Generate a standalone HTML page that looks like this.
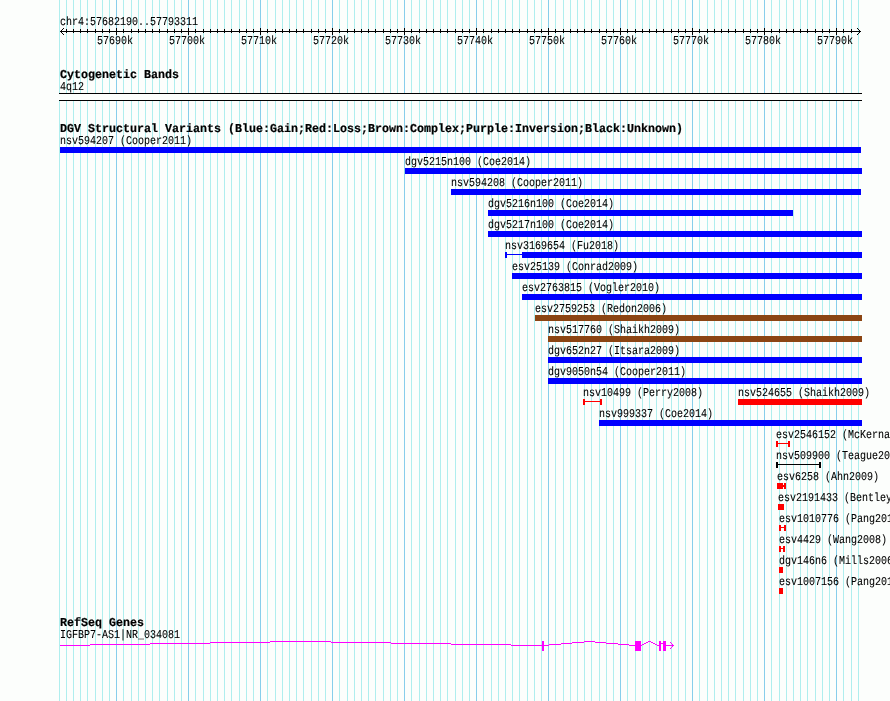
<!DOCTYPE html>
<html><head><meta charset="utf-8"><title>GBrowse</title>
<style>
html,body{margin:0;padding:0;background:#fcfefc;}
body{width:890px;height:701px;overflow:hidden;}
svg{display:block;will-change:transform;}
text{font-family:"Liberation Mono",monospace;white-space:pre;text-rendering:geometricPrecision;}
text.r{font-size:12px;font-weight:normal;stroke:#000;stroke-width:0.1px;}
text.b{font-size:12px;font-weight:bold;stroke:#000;stroke-width:0.2px;}
</style></head><body>
<svg width="890" height="701" viewBox="0 0 890 701">
<rect x="0" y="0" width="890" height="701" fill="#fcfefc"/>
<g shape-rendering="crispEdges">
<rect x="59" y="0" width="1" height="701" fill="#afeeee"/>
<rect x="66" y="0" width="1" height="701" fill="#afeeee"/>
<rect x="73" y="0" width="1" height="701" fill="#afeeee"/>
<rect x="80" y="0" width="1" height="701" fill="#afeeee"/>
<rect x="87" y="0" width="1" height="701" fill="#afeeee"/>
<rect x="95" y="0" width="1" height="701" fill="#afeeee"/>
<rect x="102" y="0" width="1" height="701" fill="#afeeee"/>
<rect x="109" y="0" width="1" height="701" fill="#afeeee"/>
<rect x="116" y="0" width="1" height="701" fill="#87ceeb"/>
<rect x="123" y="0" width="1" height="701" fill="#afeeee"/>
<rect x="131" y="0" width="1" height="701" fill="#afeeee"/>
<rect x="138" y="0" width="1" height="701" fill="#afeeee"/>
<rect x="145" y="0" width="1" height="701" fill="#afeeee"/>
<rect x="152" y="0" width="1" height="701" fill="#afeeee"/>
<rect x="159" y="0" width="1" height="701" fill="#afeeee"/>
<rect x="167" y="0" width="1" height="701" fill="#afeeee"/>
<rect x="174" y="0" width="1" height="701" fill="#afeeee"/>
<rect x="181" y="0" width="1" height="701" fill="#afeeee"/>
<rect x="188" y="0" width="1" height="701" fill="#87ceeb"/>
<rect x="195" y="0" width="1" height="701" fill="#afeeee"/>
<rect x="203" y="0" width="1" height="701" fill="#afeeee"/>
<rect x="210" y="0" width="1" height="701" fill="#afeeee"/>
<rect x="217" y="0" width="1" height="701" fill="#afeeee"/>
<rect x="224" y="0" width="1" height="701" fill="#afeeee"/>
<rect x="231" y="0" width="1" height="701" fill="#afeeee"/>
<rect x="239" y="0" width="1" height="701" fill="#afeeee"/>
<rect x="246" y="0" width="1" height="701" fill="#afeeee"/>
<rect x="253" y="0" width="1" height="701" fill="#afeeee"/>
<rect x="260" y="0" width="1" height="701" fill="#87ceeb"/>
<rect x="267" y="0" width="1" height="701" fill="#afeeee"/>
<rect x="275" y="0" width="1" height="701" fill="#afeeee"/>
<rect x="282" y="0" width="1" height="701" fill="#afeeee"/>
<rect x="289" y="0" width="1" height="701" fill="#afeeee"/>
<rect x="296" y="0" width="1" height="701" fill="#afeeee"/>
<rect x="303" y="0" width="1" height="701" fill="#afeeee"/>
<rect x="311" y="0" width="1" height="701" fill="#afeeee"/>
<rect x="318" y="0" width="1" height="701" fill="#afeeee"/>
<rect x="325" y="0" width="1" height="701" fill="#afeeee"/>
<rect x="332" y="0" width="1" height="701" fill="#87ceeb"/>
<rect x="339" y="0" width="1" height="701" fill="#afeeee"/>
<rect x="347" y="0" width="1" height="701" fill="#afeeee"/>
<rect x="354" y="0" width="1" height="701" fill="#afeeee"/>
<rect x="361" y="0" width="1" height="701" fill="#afeeee"/>
<rect x="368" y="0" width="1" height="701" fill="#afeeee"/>
<rect x="375" y="0" width="1" height="701" fill="#afeeee"/>
<rect x="383" y="0" width="1" height="701" fill="#afeeee"/>
<rect x="390" y="0" width="1" height="701" fill="#afeeee"/>
<rect x="397" y="0" width="1" height="701" fill="#afeeee"/>
<rect x="404" y="0" width="1" height="701" fill="#87ceeb"/>
<rect x="411" y="0" width="1" height="701" fill="#afeeee"/>
<rect x="419" y="0" width="1" height="701" fill="#afeeee"/>
<rect x="426" y="0" width="1" height="701" fill="#afeeee"/>
<rect x="433" y="0" width="1" height="701" fill="#afeeee"/>
<rect x="440" y="0" width="1" height="701" fill="#afeeee"/>
<rect x="447" y="0" width="1" height="701" fill="#afeeee"/>
<rect x="455" y="0" width="1" height="701" fill="#afeeee"/>
<rect x="462" y="0" width="1" height="701" fill="#afeeee"/>
<rect x="469" y="0" width="1" height="701" fill="#afeeee"/>
<rect x="476" y="0" width="1" height="701" fill="#87ceeb"/>
<rect x="483" y="0" width="1" height="701" fill="#afeeee"/>
<rect x="491" y="0" width="1" height="701" fill="#afeeee"/>
<rect x="498" y="0" width="1" height="701" fill="#afeeee"/>
<rect x="505" y="0" width="1" height="701" fill="#afeeee"/>
<rect x="512" y="0" width="1" height="701" fill="#afeeee"/>
<rect x="519" y="0" width="1" height="701" fill="#afeeee"/>
<rect x="527" y="0" width="1" height="701" fill="#afeeee"/>
<rect x="534" y="0" width="1" height="701" fill="#afeeee"/>
<rect x="541" y="0" width="1" height="701" fill="#afeeee"/>
<rect x="548" y="0" width="1" height="701" fill="#87ceeb"/>
<rect x="555" y="0" width="1" height="701" fill="#afeeee"/>
<rect x="563" y="0" width="1" height="701" fill="#afeeee"/>
<rect x="570" y="0" width="1" height="701" fill="#afeeee"/>
<rect x="577" y="0" width="1" height="701" fill="#afeeee"/>
<rect x="584" y="0" width="1" height="701" fill="#afeeee"/>
<rect x="591" y="0" width="1" height="701" fill="#afeeee"/>
<rect x="599" y="0" width="1" height="701" fill="#afeeee"/>
<rect x="606" y="0" width="1" height="701" fill="#afeeee"/>
<rect x="613" y="0" width="1" height="701" fill="#afeeee"/>
<rect x="620" y="0" width="1" height="701" fill="#87ceeb"/>
<rect x="627" y="0" width="1" height="701" fill="#afeeee"/>
<rect x="635" y="0" width="1" height="701" fill="#afeeee"/>
<rect x="642" y="0" width="1" height="701" fill="#afeeee"/>
<rect x="649" y="0" width="1" height="701" fill="#afeeee"/>
<rect x="656" y="0" width="1" height="701" fill="#afeeee"/>
<rect x="663" y="0" width="1" height="701" fill="#afeeee"/>
<rect x="671" y="0" width="1" height="701" fill="#afeeee"/>
<rect x="678" y="0" width="1" height="701" fill="#afeeee"/>
<rect x="685" y="0" width="1" height="701" fill="#afeeee"/>
<rect x="692" y="0" width="1" height="701" fill="#87ceeb"/>
<rect x="699" y="0" width="1" height="701" fill="#afeeee"/>
<rect x="707" y="0" width="1" height="701" fill="#afeeee"/>
<rect x="714" y="0" width="1" height="701" fill="#afeeee"/>
<rect x="721" y="0" width="1" height="701" fill="#afeeee"/>
<rect x="728" y="0" width="1" height="701" fill="#afeeee"/>
<rect x="735" y="0" width="1" height="701" fill="#afeeee"/>
<rect x="743" y="0" width="1" height="701" fill="#afeeee"/>
<rect x="750" y="0" width="1" height="701" fill="#afeeee"/>
<rect x="757" y="0" width="1" height="701" fill="#afeeee"/>
<rect x="764" y="0" width="1" height="701" fill="#87ceeb"/>
<rect x="771" y="0" width="1" height="701" fill="#afeeee"/>
<rect x="779" y="0" width="1" height="701" fill="#afeeee"/>
<rect x="786" y="0" width="1" height="701" fill="#afeeee"/>
<rect x="793" y="0" width="1" height="701" fill="#afeeee"/>
<rect x="800" y="0" width="1" height="701" fill="#afeeee"/>
<rect x="807" y="0" width="1" height="701" fill="#afeeee"/>
<rect x="815" y="0" width="1" height="701" fill="#afeeee"/>
<rect x="822" y="0" width="1" height="701" fill="#afeeee"/>
<rect x="829" y="0" width="1" height="701" fill="#afeeee"/>
<rect x="836" y="0" width="1" height="701" fill="#87ceeb"/>
<rect x="843" y="0" width="1" height="701" fill="#afeeee"/>
<rect x="851" y="0" width="1" height="701" fill="#afeeee"/>
<rect x="858" y="0" width="1" height="701" fill="#afeeee"/>
<rect x="60" y="31" width="801" height="1" fill="#000"/>
<rect x="61" y="30" width="1" height="1" fill="#000"/>
<rect x="859" y="30" width="1" height="1" fill="#000"/>
<rect x="62" y="29" width="1" height="1" fill="#000"/>
<rect x="858" y="29" width="1" height="1" fill="#000"/>
<rect x="63" y="28" width="1" height="1" fill="#000"/>
<rect x="857" y="28" width="1" height="1" fill="#000"/>
<rect x="61" y="32" width="1" height="1" fill="#000"/>
<rect x="859" y="32" width="1" height="1" fill="#000"/>
<rect x="62" y="33" width="1" height="1" fill="#000"/>
<rect x="858" y="33" width="1" height="1" fill="#000"/>
<rect x="63" y="34" width="1" height="1" fill="#000"/>
<rect x="857" y="34" width="1" height="1" fill="#000"/>
<rect x="66" y="29" width="1" height="4" fill="#000"/>
<rect x="73" y="29" width="1" height="4" fill="#000"/>
<rect x="80" y="29" width="1" height="4" fill="#000"/>
<rect x="87" y="29" width="1" height="4" fill="#000"/>
<rect x="95" y="29" width="1" height="4" fill="#000"/>
<rect x="102" y="29" width="1" height="4" fill="#000"/>
<rect x="109" y="29" width="1" height="4" fill="#000"/>
<rect x="116" y="28" width="1" height="7" fill="#000"/>
<rect x="123" y="29" width="1" height="4" fill="#000"/>
<rect x="131" y="29" width="1" height="4" fill="#000"/>
<rect x="138" y="29" width="1" height="4" fill="#000"/>
<rect x="145" y="29" width="1" height="4" fill="#000"/>
<rect x="152" y="29" width="1" height="4" fill="#000"/>
<rect x="159" y="29" width="1" height="4" fill="#000"/>
<rect x="167" y="29" width="1" height="4" fill="#000"/>
<rect x="174" y="29" width="1" height="4" fill="#000"/>
<rect x="181" y="29" width="1" height="4" fill="#000"/>
<rect x="188" y="28" width="1" height="7" fill="#000"/>
<rect x="195" y="29" width="1" height="4" fill="#000"/>
<rect x="203" y="29" width="1" height="4" fill="#000"/>
<rect x="210" y="29" width="1" height="4" fill="#000"/>
<rect x="217" y="29" width="1" height="4" fill="#000"/>
<rect x="224" y="29" width="1" height="4" fill="#000"/>
<rect x="231" y="29" width="1" height="4" fill="#000"/>
<rect x="239" y="29" width="1" height="4" fill="#000"/>
<rect x="246" y="29" width="1" height="4" fill="#000"/>
<rect x="253" y="29" width="1" height="4" fill="#000"/>
<rect x="260" y="28" width="1" height="7" fill="#000"/>
<rect x="267" y="29" width="1" height="4" fill="#000"/>
<rect x="275" y="29" width="1" height="4" fill="#000"/>
<rect x="282" y="29" width="1" height="4" fill="#000"/>
<rect x="289" y="29" width="1" height="4" fill="#000"/>
<rect x="296" y="29" width="1" height="4" fill="#000"/>
<rect x="303" y="29" width="1" height="4" fill="#000"/>
<rect x="311" y="29" width="1" height="4" fill="#000"/>
<rect x="318" y="29" width="1" height="4" fill="#000"/>
<rect x="325" y="29" width="1" height="4" fill="#000"/>
<rect x="332" y="28" width="1" height="7" fill="#000"/>
<rect x="339" y="29" width="1" height="4" fill="#000"/>
<rect x="347" y="29" width="1" height="4" fill="#000"/>
<rect x="354" y="29" width="1" height="4" fill="#000"/>
<rect x="361" y="29" width="1" height="4" fill="#000"/>
<rect x="368" y="29" width="1" height="4" fill="#000"/>
<rect x="375" y="29" width="1" height="4" fill="#000"/>
<rect x="383" y="29" width="1" height="4" fill="#000"/>
<rect x="390" y="29" width="1" height="4" fill="#000"/>
<rect x="397" y="29" width="1" height="4" fill="#000"/>
<rect x="404" y="28" width="1" height="7" fill="#000"/>
<rect x="411" y="29" width="1" height="4" fill="#000"/>
<rect x="419" y="29" width="1" height="4" fill="#000"/>
<rect x="426" y="29" width="1" height="4" fill="#000"/>
<rect x="433" y="29" width="1" height="4" fill="#000"/>
<rect x="440" y="29" width="1" height="4" fill="#000"/>
<rect x="447" y="29" width="1" height="4" fill="#000"/>
<rect x="455" y="29" width="1" height="4" fill="#000"/>
<rect x="462" y="29" width="1" height="4" fill="#000"/>
<rect x="469" y="29" width="1" height="4" fill="#000"/>
<rect x="476" y="28" width="1" height="7" fill="#000"/>
<rect x="483" y="29" width="1" height="4" fill="#000"/>
<rect x="491" y="29" width="1" height="4" fill="#000"/>
<rect x="498" y="29" width="1" height="4" fill="#000"/>
<rect x="505" y="29" width="1" height="4" fill="#000"/>
<rect x="512" y="29" width="1" height="4" fill="#000"/>
<rect x="519" y="29" width="1" height="4" fill="#000"/>
<rect x="527" y="29" width="1" height="4" fill="#000"/>
<rect x="534" y="29" width="1" height="4" fill="#000"/>
<rect x="541" y="29" width="1" height="4" fill="#000"/>
<rect x="548" y="28" width="1" height="7" fill="#000"/>
<rect x="555" y="29" width="1" height="4" fill="#000"/>
<rect x="563" y="29" width="1" height="4" fill="#000"/>
<rect x="570" y="29" width="1" height="4" fill="#000"/>
<rect x="577" y="29" width="1" height="4" fill="#000"/>
<rect x="584" y="29" width="1" height="4" fill="#000"/>
<rect x="591" y="29" width="1" height="4" fill="#000"/>
<rect x="599" y="29" width="1" height="4" fill="#000"/>
<rect x="606" y="29" width="1" height="4" fill="#000"/>
<rect x="613" y="29" width="1" height="4" fill="#000"/>
<rect x="620" y="28" width="1" height="7" fill="#000"/>
<rect x="627" y="29" width="1" height="4" fill="#000"/>
<rect x="635" y="29" width="1" height="4" fill="#000"/>
<rect x="642" y="29" width="1" height="4" fill="#000"/>
<rect x="649" y="29" width="1" height="4" fill="#000"/>
<rect x="656" y="29" width="1" height="4" fill="#000"/>
<rect x="663" y="29" width="1" height="4" fill="#000"/>
<rect x="671" y="29" width="1" height="4" fill="#000"/>
<rect x="678" y="29" width="1" height="4" fill="#000"/>
<rect x="685" y="29" width="1" height="4" fill="#000"/>
<rect x="692" y="28" width="1" height="7" fill="#000"/>
<rect x="699" y="29" width="1" height="4" fill="#000"/>
<rect x="707" y="29" width="1" height="4" fill="#000"/>
<rect x="714" y="29" width="1" height="4" fill="#000"/>
<rect x="721" y="29" width="1" height="4" fill="#000"/>
<rect x="728" y="29" width="1" height="4" fill="#000"/>
<rect x="735" y="29" width="1" height="4" fill="#000"/>
<rect x="743" y="29" width="1" height="4" fill="#000"/>
<rect x="750" y="29" width="1" height="4" fill="#000"/>
<rect x="757" y="29" width="1" height="4" fill="#000"/>
<rect x="764" y="28" width="1" height="7" fill="#000"/>
<rect x="771" y="29" width="1" height="4" fill="#000"/>
<rect x="779" y="29" width="1" height="4" fill="#000"/>
<rect x="786" y="29" width="1" height="4" fill="#000"/>
<rect x="793" y="29" width="1" height="4" fill="#000"/>
<rect x="800" y="29" width="1" height="4" fill="#000"/>
<rect x="807" y="29" width="1" height="4" fill="#000"/>
<rect x="815" y="29" width="1" height="4" fill="#000"/>
<rect x="822" y="29" width="1" height="4" fill="#000"/>
<rect x="829" y="29" width="1" height="4" fill="#000"/>
<rect x="836" y="28" width="1" height="7" fill="#000"/>
<rect x="843" y="29" width="1" height="4" fill="#000"/>
<rect x="851" y="29" width="1" height="4" fill="#000"/>
<rect x="59" y="93" width="803" height="8" fill="#fcfefc"/>
<rect x="59" y="93" width="803" height="1" fill="#000"/>
<rect x="59" y="100" width="803" height="1" fill="#000"/>
<rect x="60" y="147" width="801" height="6" fill="#0000ff"/>
<rect x="405" y="168" width="457" height="6" fill="#0000ff"/>
<rect x="451" y="189" width="410" height="6" fill="#0000ff"/>
<rect x="488" y="210" width="305" height="6" fill="#0000ff"/>
<rect x="488" y="231" width="374" height="6" fill="#0000ff"/>
<rect x="505" y="252" width="2" height="6" fill="#0000ff"/>
<rect x="507" y="254" width="15" height="1" fill="#0000ff"/>
<rect x="522" y="252" width="340" height="6" fill="#0000ff"/>
<rect x="512" y="273" width="350" height="6" fill="#0000ff"/>
<rect x="522" y="294" width="340" height="6" fill="#0000ff"/>
<rect x="535" y="315" width="327" height="6" fill="#8b4513"/>
<rect x="548" y="336" width="314" height="6" fill="#8b4513"/>
<rect x="548" y="357" width="314" height="6" fill="#0000ff"/>
<rect x="548" y="378" width="314" height="6" fill="#0000ff"/>
<rect x="583" y="399" width="2" height="6" fill="#ff0000"/>
<rect x="600" y="399" width="2" height="6" fill="#ff0000"/>
<rect x="585" y="401" width="15" height="1" fill="#ff0000"/>
<rect x="599" y="420" width="263" height="6" fill="#0000ff"/>
<rect x="776" y="441" width="2" height="6" fill="#ff0000"/>
<rect x="788" y="441" width="2" height="6" fill="#ff0000"/>
<rect x="778" y="443" width="10" height="1" fill="#ff0000"/>
<rect x="776" y="462" width="2" height="6" fill="#000000"/>
<rect x="819" y="462" width="2" height="6" fill="#000000"/>
<rect x="778" y="464" width="41" height="1" fill="#000000"/>
<rect x="777" y="483" width="6" height="6" fill="#ff0000"/>
<rect x="783" y="485" width="1" height="2" fill="#ff0000"/>
<rect x="784" y="483" width="2" height="6" fill="#ff0000"/>
<rect x="778" y="504" width="6" height="6" fill="#ff0000"/>
<rect x="779" y="525" width="2" height="6" fill="#ff0000"/>
<rect x="784" y="525" width="2" height="6" fill="#ff0000"/>
<rect x="781" y="527" width="3" height="1" fill="#ff0000"/>
<rect x="779" y="546" width="2" height="6" fill="#ff0000"/>
<rect x="783" y="546" width="2" height="6" fill="#ff0000"/>
<rect x="781" y="548" width="2" height="1" fill="#ff0000"/>
<rect x="779" y="567" width="4" height="6" fill="#ff0000"/>
<rect x="779" y="588" width="4" height="6" fill="#ff0000"/>
<rect x="738" y="399" width="124" height="6" fill="#ff0000"/>
<rect x="60" y="645" width="30" height="1" fill="#ff00ff"/>
<rect x="90" y="644" width="60" height="1" fill="#ff00ff"/>
<rect x="150" y="643" width="60" height="1" fill="#ff00ff"/>
<rect x="210" y="642" width="60" height="1" fill="#ff00ff"/>
<rect x="270" y="641" width="61" height="1" fill="#ff00ff"/>
<rect x="331" y="642" width="60" height="1" fill="#ff00ff"/>
<rect x="391" y="643" width="60" height="1" fill="#ff00ff"/>
<rect x="451" y="644" width="60" height="1" fill="#ff00ff"/>
<rect x="511" y="645" width="31" height="1" fill="#ff00ff"/>
<rect x="544" y="645" width="5" height="1" fill="#ff00ff"/>
<rect x="549" y="644" width="12" height="1" fill="#ff00ff"/>
<rect x="561" y="643" width="11" height="1" fill="#ff00ff"/>
<rect x="572" y="642" width="12" height="1" fill="#ff00ff"/>
<rect x="584" y="641" width="11" height="1" fill="#ff00ff"/>
<rect x="595" y="642" width="11" height="1" fill="#ff00ff"/>
<rect x="606" y="643" width="12" height="1" fill="#ff00ff"/>
<rect x="618" y="644" width="11" height="1" fill="#ff00ff"/>
<rect x="629" y="645" width="6" height="1" fill="#ff00ff"/>
<rect x="641" y="645" width="1" height="1" fill="#ff00ff"/>
<rect x="642" y="644" width="2" height="1" fill="#ff00ff"/>
<rect x="644" y="643" width="2" height="1" fill="#ff00ff"/>
<rect x="646" y="642" width="2" height="1" fill="#ff00ff"/>
<rect x="648" y="641" width="3" height="1" fill="#ff00ff"/>
<rect x="651" y="642" width="2" height="1" fill="#ff00ff"/>
<rect x="653" y="643" width="2" height="1" fill="#ff00ff"/>
<rect x="655" y="644" width="2" height="1" fill="#ff00ff"/>
<rect x="657" y="645" width="2" height="1" fill="#ff00ff"/>
<rect x="542" y="641" width="2" height="10" fill="#ff00ff"/>
<rect x="635" y="641" width="6" height="10" fill="#ff00ff"/>
<rect x="659" y="641" width="2" height="10" fill="#ff00ff"/>
<rect x="661" y="643" width="2" height="1" fill="#ff00ff"/>
<rect x="663" y="641" width="3" height="10" fill="#ff00ff"/>
<rect x="666" y="645" width="8" height="1" fill="#ff00ff"/>
<rect x="672" y="644" width="1" height="1" fill="#ff00ff"/>
<rect x="672" y="646" width="1" height="1" fill="#ff00ff"/>
<rect x="671" y="643" width="1" height="1" fill="#ff00ff"/>
<rect x="671" y="647" width="1" height="1" fill="#ff00ff"/>
<rect x="670" y="642" width="1" height="1" fill="#ff00ff"/>
<rect x="670" y="648" width="1" height="1" fill="#ff00ff"/>
</g>
<g>
<text x="60" y="25" textLength="138" lengthAdjust="spacingAndGlyphs" class="r">chr4:57682190..57793311</text>
<text x="97" y="44" textLength="36" lengthAdjust="spacingAndGlyphs" class="r">57690k</text>
<text x="169" y="44" textLength="36" lengthAdjust="spacingAndGlyphs" class="r">57700k</text>
<text x="241" y="44" textLength="36" lengthAdjust="spacingAndGlyphs" class="r">57710k</text>
<text x="313" y="44" textLength="36" lengthAdjust="spacingAndGlyphs" class="r">57720k</text>
<text x="385" y="44" textLength="36" lengthAdjust="spacingAndGlyphs" class="r">57730k</text>
<text x="457" y="44" textLength="36" lengthAdjust="spacingAndGlyphs" class="r">57740k</text>
<text x="529" y="44" textLength="36" lengthAdjust="spacingAndGlyphs" class="r">57750k</text>
<text x="601" y="44" textLength="36" lengthAdjust="spacingAndGlyphs" class="r">57760k</text>
<text x="673" y="44" textLength="36" lengthAdjust="spacingAndGlyphs" class="r">57770k</text>
<text x="745" y="44" textLength="36" lengthAdjust="spacingAndGlyphs" class="r">57780k</text>
<text x="817" y="44" textLength="36" lengthAdjust="spacingAndGlyphs" class="r">57790k</text>
<text x="60" y="78" textLength="119" lengthAdjust="spacingAndGlyphs" class="b">Cytogenetic Bands</text>
<text x="60" y="90" textLength="24" lengthAdjust="spacingAndGlyphs" class="r">4q12</text>
<text x="60" y="132" textLength="623" lengthAdjust="spacingAndGlyphs" class="b">DGV Structural Variants (Blue:Gain;Red:Loss;Brown:Complex;Purple:Inversion;Black:Unknown)</text>
<text x="60" y="144" textLength="132" lengthAdjust="spacingAndGlyphs" class="r">nsv594207 (Cooper2011)</text>
<text x="405" y="165" textLength="126" lengthAdjust="spacingAndGlyphs" class="r">dgv5215n100 (Coe2014)</text>
<text x="451" y="186" textLength="132" lengthAdjust="spacingAndGlyphs" class="r">nsv594208 (Cooper2011)</text>
<text x="488" y="207" textLength="126" lengthAdjust="spacingAndGlyphs" class="r">dgv5216n100 (Coe2014)</text>
<text x="488" y="228" textLength="126" lengthAdjust="spacingAndGlyphs" class="r">dgv5217n100 (Coe2014)</text>
<text x="505" y="249" textLength="114" lengthAdjust="spacingAndGlyphs" class="r">nsv3169654 (Fu2018)</text>
<text x="512" y="270" textLength="126" lengthAdjust="spacingAndGlyphs" class="r">esv25139 (Conrad2009)</text>
<text x="522" y="291" textLength="138" lengthAdjust="spacingAndGlyphs" class="r">esv2763815 (Vogler2010)</text>
<text x="535" y="312" textLength="132" lengthAdjust="spacingAndGlyphs" class="r">esv2759253 (Redon2006)</text>
<text x="548" y="333" textLength="132" lengthAdjust="spacingAndGlyphs" class="r">nsv517760 (Shaikh2009)</text>
<text x="548" y="354" textLength="132" lengthAdjust="spacingAndGlyphs" class="r">dgv652n27 (Itsara2009)</text>
<text x="548" y="375" textLength="138" lengthAdjust="spacingAndGlyphs" class="r">dgv9050n54 (Cooper2011)</text>
<text x="583" y="396" textLength="120" lengthAdjust="spacingAndGlyphs" class="r">nsv10499 (Perry2008)</text>
<text x="599" y="417" textLength="114" lengthAdjust="spacingAndGlyphs" class="r">nsv999337 (Coe2014)</text>
<text x="776" y="438" textLength="150" lengthAdjust="spacingAndGlyphs" class="r">esv2546152 (McKernan2009)</text>
<text x="776" y="459" textLength="132" lengthAdjust="spacingAndGlyphs" class="r">nsv509900 (Teague2010)</text>
<text x="777" y="480" textLength="102" lengthAdjust="spacingAndGlyphs" class="r">esv6258 (Ahn2009)</text>
<text x="778" y="501" textLength="144" lengthAdjust="spacingAndGlyphs" class="r">esv2191433 (Bentley2008)</text>
<text x="779" y="522" textLength="126" lengthAdjust="spacingAndGlyphs" class="r">esv1010776 (Pang2010)</text>
<text x="779" y="543" textLength="108" lengthAdjust="spacingAndGlyphs" class="r">esv4429 (Wang2008)</text>
<text x="779" y="564" textLength="120" lengthAdjust="spacingAndGlyphs" class="r">dgv146n6 (Mills2006)</text>
<text x="779" y="585" textLength="126" lengthAdjust="spacingAndGlyphs" class="r">esv1007156 (Pang2010)</text>
<text x="738" y="396" textLength="132" lengthAdjust="spacingAndGlyphs" class="r">nsv524655 (Shaikh2009)</text>
<text x="60" y="626" textLength="84" lengthAdjust="spacingAndGlyphs" class="b">RefSeq Genes</text>
<text x="60" y="638" textLength="120" lengthAdjust="spacingAndGlyphs" class="r">IGFBP7-AS1|NR_034081</text>
</g>
</svg>
</body></html>
